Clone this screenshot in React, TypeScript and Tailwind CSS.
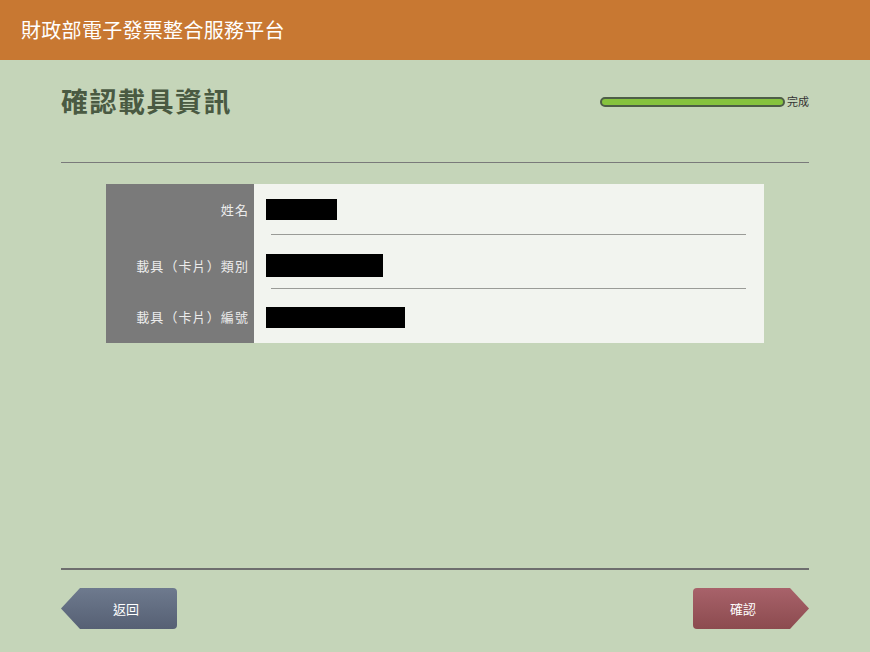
const rows = [
  { label: "姓名", width: "w-[71px]", height: "h-[21px]", rowHeight: "h-[51px]", pad: "pt-0" },
  { label: "載具（卡片）類別", width: "w-[117px]", height: "h-[23px]", rowHeight: "h-[54px]", pad: "pt-[8px]" },
  { label: "載具（卡片）編號", width: "w-[139px]", height: "h-[21px]", rowHeight: "h-[54px]", pad: "pt-[2px]" },
];

export default function App() {
  return (
    <div className="min-h-[652px] w-full bg-[#c5d5b9] font-['Noto_Sans_CJK_TC','Noto_Sans_CJK_SC',sans-serif]">
      <header className="flex h-[60px] items-center bg-[#c87832] pl-[21px]">
        <h1 className="text-[20px] leading-none tracking-[0.3px] text-white">財政部電子發票整合服務平台</h1>
      </header>

      <main className="mx-[61px]">
        <div className="flex h-[102px] items-start justify-between pt-[24px]">
          <h2 className="text-[27px] font-bold leading-[34px] tracking-[1.5px] text-[#4a5a42]">確認載具資訊</h2>
          <div className="mt-[12px] flex items-center">
            <div className="h-[10px] w-[185px] rounded-full border-[2px] border-[#4e5e47] bg-[#86c33e]" />
            <span className="ml-[2px] text-[11px] leading-none text-[#333]">完成</span>
          </div>
        </div>
        <div className="h-px bg-[#7a7a7a]" />

        <div className="mx-[45px] mt-[21px] grid grid-cols-[148px_1fr]">
          {rows.map((row, i) => (
            <div key={row.label} className="contents">
              <div
                className={`flex ${row.rowHeight} ${row.pad} items-center justify-end bg-[#7a7a7a] pr-[5px] text-[13px] tracking-[1.1px] text-[#ececec]`}
              >
                {row.label}
              </div>
              <div className={`flex ${row.rowHeight} flex-col bg-[#f2f4ef]`}>
                <div className={`flex flex-1 items-center pl-[12px] ${row.pad}`}>
                  <div className={`${row.width} ${row.height} bg-black`} />
                </div>
                {i < rows.length - 1 ? <div className="ml-[17px] mr-[18px] h-px bg-[#9a9b97]" /> : null}
              </div>
            </div>
          ))}
        </div>

        <div className="mt-[225px] h-[2px] bg-[#6e6e6e]" />

        <div className="mt-[18px] flex justify-between">
          <button
            type="button"
            className="flex h-[41px] w-[116px] items-center justify-center rounded-[4px] bg-gradient-to-b from-[#6e7a8e] to-[#566074] pl-[14px] text-[13px] text-white [clip-path:polygon(19px_0,100%_0,100%_100%,19px_100%,0_50%)]"
          >
            返回
          </button>
          <button
            type="button"
            className="flex h-[41px] w-[116px] items-center justify-center rounded-[4px] bg-gradient-to-b from-[#a8626a] to-[#8c4b4f] pr-[16px] text-[13px] text-white [clip-path:polygon(0_0,calc(100%-19px)_0,100%_50%,calc(100%-19px)_100%,0_100%)]"
          >
            確認
          </button>
        </div>
      </main>
    </div>
  );
}
